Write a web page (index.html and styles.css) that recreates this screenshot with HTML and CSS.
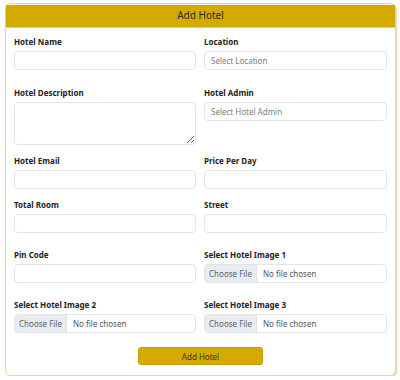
FILE: index.html
```html
<!DOCTYPE html>
<html lang="en">
<head>
  <meta charset="UTF-8">
  <meta name="viewport" content="width=device-width, initial-scale=1.0">
  <title>Add Hotel</title>
  <link rel="stylesheet" href="styles.css">
</head>
<body>
  <div class="card">
    <div class="card-header">Add Hotel</div>

    <form class="hotel-form">
      <div class="group">
        <label for="hotelName">Hotel Name</label>
        <input type="text" id="hotelName">
      </div>
      <div class="group">
        <label for="location">Location</label>
        <input type="text" id="location" placeholder="Select Location">
      </div>

      <div class="group spaced-lg">
        <label for="description">Hotel Description</label>
        <textarea id="description"></textarea>
      </div>
      <div class="group spaced-lg">
        <label for="admin">Hotel Admin</label>
        <input type="text" id="admin" placeholder="Select Hotel Admin">
      </div>

      <div class="group">
        <label for="email">Hotel Email</label>
        <input type="email" id="email">
      </div>
      <div class="group">
        <label for="price">Price Per Day</label>
        <input type="text" id="price">
      </div>

      <div class="group">
        <label for="rooms">Total Room</label>
        <input type="text" id="rooms">
      </div>
      <div class="group">
        <label for="street">Street</label>
        <input type="text" id="street">
      </div>

      <div class="group spaced">
        <label for="pin">Pin Code</label>
        <input type="text" id="pin">
      </div>
      <div class="group spaced">
        <label for="image1">Select Hotel Image 1</label>
        <input type="file" id="image1">
      </div>

      <div class="group spaced">
        <label for="image2">Select Hotel Image 2</label>
        <input type="file" id="image2">
      </div>
      <div class="group spaced">
        <label for="image3">Select Hotel Image 3</label>
        <input type="file" id="image3">
      </div>

      <div class="actions">
        <button type="button">Add Hotel</button>
      </div>
    </form>
  </div>
</body>
</html>
```

FILE: styles.css
```css
body, html {
  margin: 0;
  padding: 0;
  background-color: #fff;
  font-family: "Noto Sans", "Open Sans", sans-serif;
  overflow: hidden;
}

body {
  padding: 3px 4px 0 5px;
}

.card {
  width: 391px;
  box-sizing: border-box;
  border: 1px solid #e7d49a;
  border-radius: 6px;
  padding-top: 1px;
  box-shadow: 1px 1px 2px rgba(150, 120, 40, 0.35);
  background-color: #fff;
}

.card-header {
  height: 23px;
  line-height: 21px;
  background-color: #d4aa00;
  border-bottom: 1px solid #e6cf86;
  box-sizing: border-box;
  text-align: center;
  font-size: 10px;
  color: #2b2b2b;
}

.hotel-form {
  display: grid;
  grid-template-columns: 182px 183px;
  column-gap: 8px;
  row-gap: 10px;
  padding: 8px 8px 10px 8px;
}

.group {
  display: flex;
  flex-direction: column;
}

.group.spaced {
  padding-top: 6px;
}

.group.spaced-lg {
  padding-top: 7px;
}

.group label {
  font-size: 8px;
  line-height: 12px;
  font-weight: bold;
  color: #222;
  margin-bottom: 3px;
}

.group input,
.group textarea {
  height: 19px;
  box-sizing: border-box;
  border: 1px solid #e1e4e8;
  border-radius: 4px;
  padding: 0 6px;
  font-family: inherit;
  font-size: 8px;
  color: #333;
  background-color: #fff;
  outline: none;
}

.group textarea {
  height: 43px;
  resize: vertical;
}

.group input::placeholder {
  color: #7a7f85;
}

.group input[type="file"] {
  padding: 0;
  line-height: 17px;
  color: #555;
  overflow: hidden;
}

.group input[type="file"]::file-selector-button {
  height: 17px;
  width: 52px;
  margin: 0 6px 0 0;
  padding: 0;
  border: none;
  border-right: 1px solid #dfe2e6;
  border-radius: 0;
  background-color: #e9ecef;
  font-family: inherit;
  font-size: 8px;
  color: #5c6166;
}

.actions {
  grid-column: 1 / 3;
  display: flex;
  justify-content: center;
  padding-top: 4px;
}

.actions button {
  width: 125px;
  height: 18px;
  border: 1px solid #c9a100;
  border-radius: 3px;
  background-color: #d4aa00;
  font-family: inherit;
  font-size: 8px;
  color: #3d3520;
  cursor: pointer;
}
```
